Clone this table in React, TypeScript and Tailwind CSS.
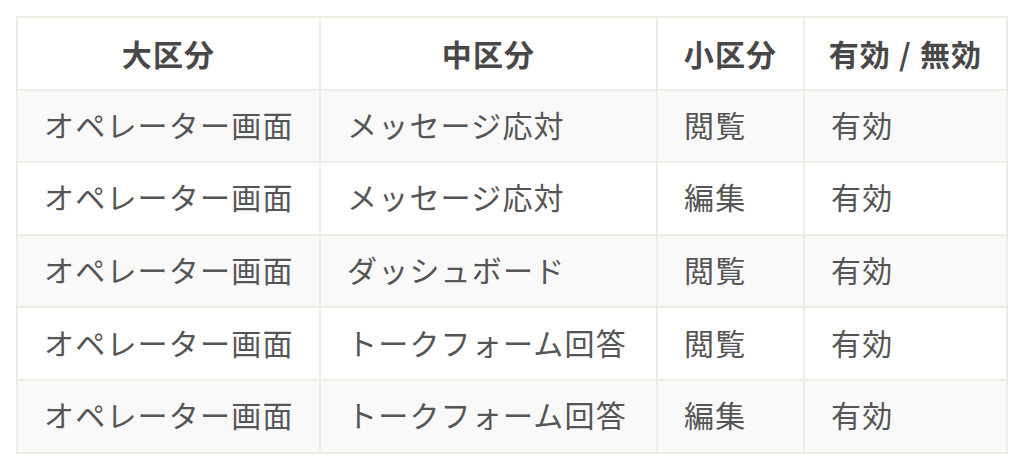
import React from "react";

const rows = [
  ["オペレーター画面", "メッセージ応対", "閲覧", "有効"],
  ["オペレーター画面", "メッセージ応対", "編集", "有効"],
  ["オペレーター画面", "ダッシュボード", "閲覧", "有効"],
  ["オペレーター画面", "トークフォーム回答", "閲覧", "有効"],
  ["オペレーター画面", "トークフォーム回答", "編集", "有効"],
];

export default function App() {
  return (
    <div
      className="w-[1024px] h-[468px] bg-white pt-[16px] pl-[16px]"
      style={{ fontFamily: '"Noto Sans CJK JP", "Noto Sans", sans-serif' }}
    >
      <table className="border-collapse border-2 border-[#ededE5] text-[30px] tracking-[1.2px] text-[#555555] table-fixed w-[990px]">
        <colgroup>
          <col className="w-[303px]" />
          <col className="w-[337px]" />
          <col className="w-[147px]" />
          <col className="w-[203px]" />
        </colgroup>
        <thead>
          <tr className="h-[72.6px] bg-white">
            {["大区分", "中区分", "小区分", "有効 / 無効"].map((h) => (
              <th
                key={h}
                className="border-2 border-[#ededE5] font-bold text-[#484848] text-center px-[20px] whitespace-nowrap"
              >
                {h}
              </th>
            ))}
          </tr>
        </thead>
        <tbody>
          {rows.map((r, i) => (
            <tr key={i} className={`h-[72.6px] ${i % 2 === 0 ? "bg-[#f9f9f9]" : "bg-white"}`}>
              {r.map((c, j) => (
                <td
                  key={j}
                  className="border-2 border-[#ededE5] text-left pl-[26px] pr-[4px] pb-[3px] whitespace-nowrap"
                >
                  {c}
                </td>
              ))}
            </tr>
          ))}
        </tbody>
      </table>
    </div>
  );
}
